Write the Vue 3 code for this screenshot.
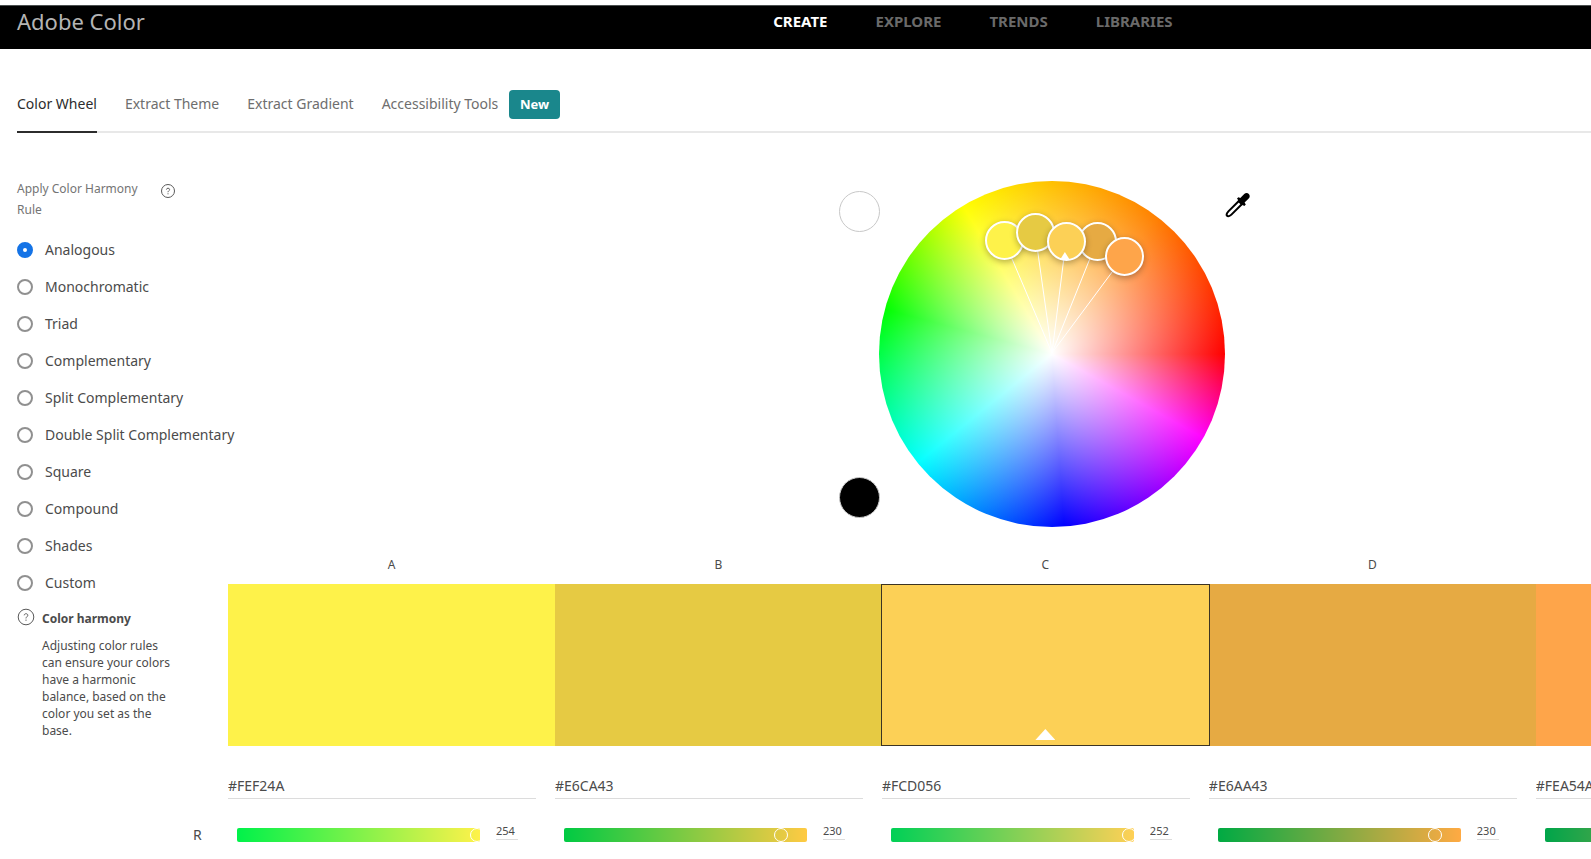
<script setup>
import { ref, computed } from 'vue'

const menu = ['CREATE', 'EXPLORE', 'TRENDS', 'LIBRARIES']
const tabs = ['Color Wheel', 'Extract Theme', 'Extract Gradient']
const rules = [
  'Analogous', 'Monochromatic', 'Triad', 'Complementary', 'Split Complementary',
  'Double Split Complementary', 'Square', 'Compound', 'Shades', 'Custom'
]
const rule = ref('Analogous')
const baseIndex = ref(2)

const swatches = ref([
  { name: 'A', hex: '#FEF24A', r: 254, x: 125, y: 59 },
  { name: 'B', hex: '#E6CA43', r: 230, x: 156, y: 51 },
  { name: 'C', hex: '#FCD056', r: 252, x: 187, y: 60 },
  { name: 'D', hex: '#E6AA43', r: 230, x: 218, y: 60 },
  { name: 'E', hex: '#FEA54A', r: 254, x: 245, y: 75 }
])

const columns = computed(() => swatches.value.map((s) => ({
  ...s,
  track: `linear-gradient(to right, #00${s.hex.slice(3)}, #FF${s.hex.slice(3)})`
})))
</script>

<template>
  <div class="viewport">
    <div class="page">
      <header class="topbar">
        <a class="brand" href="#">Adobe Color</a>
        <nav class="menu" aria-label="Main">
          <a v-for="(m, i) in menu" :key="m" href="#" :class="{ active: i === 0 }">{{ m }}</a>
        </nav>
      </header>

      <nav class="tabs" aria-label="Create">
        <a v-for="(t, i) in tabs" :key="t" href="#" class="tab" :class="{ current: i === 0 }">{{ t }}</a>
        <a href="#" class="tab">Accessibility Tools <span class="badge">New</span></a>
      </nav>

      <main class="content">
        <aside class="sidebar">
          <div class="heading">
            <h2 id="rule-title">Apply Color Harmony Rule</h2>
            <button class="help" type="button" aria-label="Help">
              <svg viewBox="0 0 16 16" width="16" height="16">
                <circle cx="8" cy="8" r="6.5" />
                <path d="M6.4 6.6C6.5 4.7 9.6 4.7 9.6 6.6C9.6 7.8 8 7.8 8 9.2M8 10.3V11.3" />
              </svg>
            </button>
          </div>
          <div class="rules" role="radiogroup" aria-labelledby="rule-title">
            <label v-for="r in rules" :key="r" class="rule">
              <input v-model="rule" type="radio" name="rule" :value="r" />
              <span>{{ r }}</span>
            </label>
          </div>
          <section class="hint">
            <svg viewBox="0 0 18 18" width="18" height="18" aria-hidden="true">
              <circle cx="9" cy="9" r="7.8" />
              <path d="M7.2 7.3C7.3 5.2 10.8 5.2 10.8 7.3C10.8 8.7 9 8.8 9 10.4M9 11.6V12.8" />
            </svg>
            <div>
              <h3>Color harmony</h3>
              <p>Adjusting color rules can ensure your colors have a harmonic balance, based on the color you set as the base.</p>
            </div>
          </section>
        </aside>

        <section class="workspace">
          <div class="stage">
            <div class="presets">
              <button class="preset white" type="button" aria-label="White background"></button>
              <button class="preset black" type="button" aria-label="Black background"></button>
            </div>
            <div class="wheel">
              <svg class="spokes" viewBox="0 0 346 346" aria-hidden="true">
                <line v-for="s in swatches" :key="s.name" x1="173" y1="172" :x2="s.x" :y2="s.y" />
              </svg>
              <button
                v-for="(s, i) in swatches" :key="s.name" type="button" class="handle"
                :class="{ base: i === baseIndex }" :aria-label="'Color ' + s.name"
                :style="{ left: s.x + 'px', top: s.y + 'px', background: s.hex }"
                @click="baseIndex = i"
              ></button>
            </div>
            <button class="dropper" type="button" aria-label="Pick a color">
              <svg viewBox="0 0 26 26" width="26" height="26">
                <path class="glass" d="M13.6 9.2L3.4 19.4C1.7 21.3 1.5 23.2 2.1 23.8C2.9 24.6 4.8 24.2 6.4 22.6L16.8 12.2" />
                <path d="M12 6.6L13.4 5.2L15.3 6.1L19.2 2.1C20.7 .6 22.8 .9 23.8 1.9C25 3.1 25.1 5 23.7 6.4L19.6 10.4L20.8 12.4L19.3 13.9L17.6 12.9L16.7 13.4L12.7 9.4L13.1 8Z" />
              </svg>
            </button>
          </div>

          <div class="palette">
            <div v-for="(s, i) in columns" :key="s.name" class="column">
              <div class="letter">{{ s.name }}</div>
              <button
                type="button" class="swatch" :class="{ selected: i === baseIndex }"
                :aria-label="'Swatch ' + s.name" :style="{ background: s.hex }" @click="baseIndex = i"
              ></button>
              <input class="hex" type="text" :aria-label="'Hex ' + s.name" v-model="swatches[i].hex" />
              <div class="channel">
                <span v-if="i === 0" class="channel-name">R</span>
                <div class="track" :style="{ background: s.track }">
                  <input type="range" min="0" max="255" v-model.number="swatches[i].r" :aria-label="'Red ' + s.name" />
                </div>
                <input class="value" type="text" v-model.number="swatches[i].r" :aria-label="'Red value ' + s.name" />
              </div>
            </div>
          </div>
        </section>
      </main>
    </div>
  </div>
</template>

<style>
body {
  margin: 0;
  background: #fff;
}
</style>

<style scoped>
.viewport {
  height: 100vh;
  overflow: hidden;
  font-family: "Noto Sans", "Open Sans", sans-serif;
  font-size: 14px;
  color: #4b4b4b;
}
.page {
  box-sizing: border-box;
  width: 122.3vw;
  padding-top: 5px;
}
button {
  padding: 0;
  border: 0;
  background: none;
  cursor: pointer;
}
input {
  font-family: inherit;
}
a {
  text-decoration: none;
  white-space: nowrap;
}
.topbar {
  box-sizing: border-box;
  height: 44px;
  padding: 0 17px 14px;
  border-top: 1px solid #4a4f4f;
  background: #000;
  display: grid;
  grid-template-columns: 1fr auto 1fr;
  align-items: center;
}
.brand {
  font-size: 22px;
  line-height: 30px;
  color: #b4b4b4;
}
.menu {
  display: flex;
  gap: 48px;
}
.menu a {
  font-size: 15px;
  line-height: 30px;
  font-weight: 700;
  color: #6a6a6a;
}
.menu a.active {
  color: #fff;
}
.tabs {
  display: flex;
  gap: 28px;
  margin-left: 17px;
  padding-top: 29px;
  border-bottom: 2px solid #e8e8e8;
}
.tab {
  box-sizing: border-box;
  height: 55px;
  margin-bottom: -2px;
  padding-top: 11px;
  line-height: 30px;
  color: #6e6e6e;
}
.tab.current {
  color: #2c2c2c;
  border-bottom: 2px solid #2c2c2c;
}
.badge {
  display: inline-block;
  margin-left: 7px;
  padding: 0 11px;
  border-radius: 4px;
  background: #1a878c;
  color: #fff;
  font-size: 13px;
  font-weight: 700;
  line-height: 29px;
}
.content {
  display: grid;
  grid-template-columns: 211px 1fr;
  padding: 48px 83px 0 17px;
}
.heading {
  display: flex;
  gap: 10px;
  height: 50px;
}
h2 {
  width: 133px;
  margin: -3px 0 0;
  font-size: 12px;
  line-height: 21px;
  font-weight: 400;
  color: #747474;
}
.help {
  width: 16px;
  height: 16px;
  margin-top: 2px;
}
.help svg {
  display: block;
}
.help svg,
.hint svg {
  fill: none;
  stroke: #5a5a5a;
  stroke-width: 1;
}
.rule {
  display: flex;
  align-items: center;
  gap: 12px;
  height: 37px;
  white-space: nowrap;
}
.rule input {
  appearance: none;
  flex: none;
  box-sizing: border-box;
  width: 16px;
  height: 16px;
  margin: 0;
  border: 2px solid #909090;
  border-radius: 50%;
  background: #fff;
}
.rule input:checked {
  border: 6px solid #1473e6;
}
.hint {
  display: flex;
  gap: 7px;
  padding-top: 7px;
}
.hint svg {
  flex: none;
}
.hint div {
  width: 130px;
}
h3,
.hint p {
  margin: 0;
  font-size: 12px;
  line-height: 17px;
}
h3 {
  margin: 2px 0 10px;
}
.stage {
  display: flex;
  justify-content: center;
  padding-right: 2px;
}
.presets {
  display: flex;
  flex-direction: column;
  justify-content: space-between;
  height: 327px;
  margin: 10px -1px 0 0;
}
.preset {
  box-sizing: border-box;
  width: 41px;
  height: 41px;
  border: 1px solid #c8c8c8;
  border-radius: 50%;
}
.white {
  background: #fff;
}
.black {
  background: #000;
}
.wheel {
  position: relative;
  width: 346px;
  height: 346px;
  border-radius: 50%;
  background:
    radial-gradient(closest-side, #fff, rgba(255, 255, 255, 0)),
    conic-gradient(from 90deg, #f00, #f0f 29deg, #00f 86deg, #0ff 141deg, #0f0 195deg, #ff0 239deg, #ffc000 270deg, #ff8000 307deg, #f00 360deg);
}
.spokes {
  display: block;
  stroke: #fff;
  stroke-width: 1;
}
.handle {
  position: absolute;
  box-sizing: border-box;
  width: 39px;
  height: 39px;
  margin: -19px 0 0 -19px;
  border: 2px solid #fff;
  border-radius: 50%;
  box-shadow: 0 2px 6px rgba(0, 0, 0, .3);
}
.handle.base {
  z-index: 1;
}
.handle.base::after,
.swatch.selected::after {
  content: "";
  position: absolute;
  left: 50%;
  background: #fff;
  clip-path: polygon(50% 0, 100% 100%, 0 100%);
}
.handle.base::after {
  bottom: -1px;
  width: 10px;
  height: 8px;
  margin-left: -7px;
}
.dropper {
  width: 24px;
  height: 26px;
  margin-top: 11px;
}
.dropper svg {
  display: block;
}
.glass {
  fill: none;
  stroke: #000;
  stroke-width: 2;
}
.palette {
  display: grid;
  grid-template-columns: repeat(5, 1fr);
  margin-top: 28px;
}
.letter {
  font-size: 12px;
  line-height: 20px;
  text-align: center;
}
.swatch {
  position: relative;
  display: block;
  box-sizing: border-box;
  width: 100%;
  height: 162px;
  margin-top: 9px;
}
.swatch.selected {
  z-index: 1;
  width: calc(100% + 2px);
  margin-left: -1px;
  border: 1px solid #3c3423;
}
.swatch.selected::after {
  bottom: 5px;
  width: 20px;
  height: 11px;
  margin-left: -10px;
}
.hex {
  display: block;
  box-sizing: border-box;
  width: calc(100% - 19px);
  height: 26px;
  margin-top: 27px;
  padding: 0;
  border: 0;
  border-bottom: 1px solid #dcdcdc;
  font-size: 14px;
  color: #4b4b4b;
}
.channel {
  position: relative;
  display: flex;
  align-items: flex-start;
  gap: 16px;
  margin-top: 25px;
  padding: 4px 37px 0 9px;
}
.channel-name {
  position: absolute;
  left: -35px;
  top: 1px;
  line-height: 20px;
}
.track {
  flex: 1;
  height: 14px;
  border-radius: 2px;
  overflow: hidden;
}
.track input {
  appearance: none;
  display: block;
  width: calc(100% + 11px);
  height: 14px;
  margin: 0 0 0 -6px;
  background: none;
}
.track input::-webkit-slider-thumb {
  appearance: none;
  box-sizing: border-box;
  width: 14px;
  height: 14px;
  border: 1px solid #fff;
  border-radius: 50%;
  background: transparent;
}
.value {
  box-sizing: border-box;
  width: 22px;
  height: 18px;
  margin-top: -6px;
  padding: 0;
  border: 0;
  border-bottom: 1px solid #dcdcdc;
  font-size: 11px;
  color: #4b4b4b;
}
</style>
